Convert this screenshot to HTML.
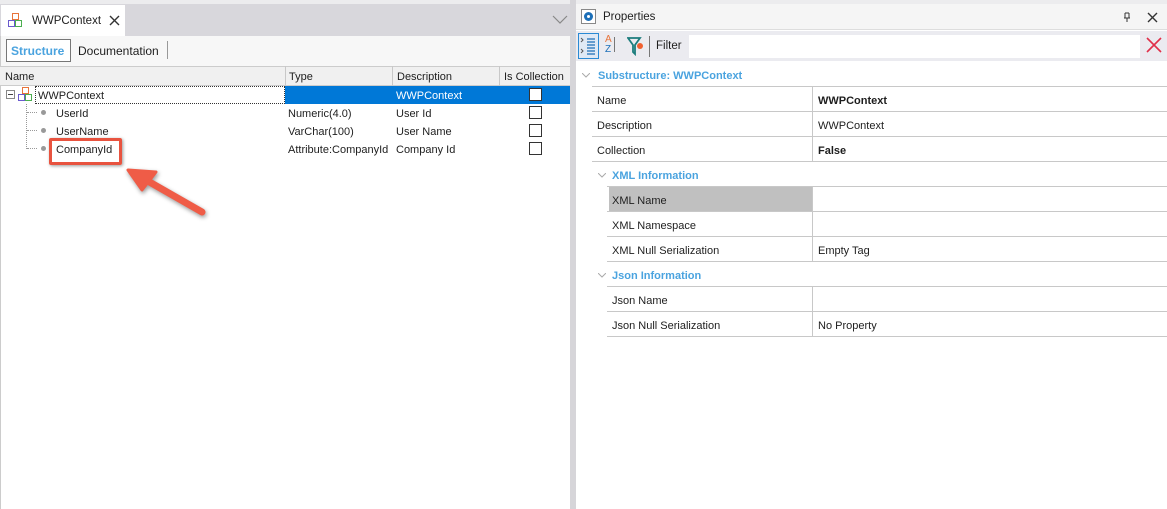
<!DOCTYPE html>
<html><head><style>
*{box-sizing:border-box;margin:0;padding:0}
body{width:1167px;height:509px;background:#fff;font-family:"Liberation Sans",sans-serif;font-size:11px;color:#1e1e1e;position:relative;overflow:hidden}
.a{position:absolute}
.t{position:absolute;white-space:nowrap;font-size:11px;margin-top:1px}
.cb{position:absolute;width:13px;height:13px;border:1px solid #333;background:#fff}
.hl{position:absolute;height:1px;background:#c8c8c8}
.vl{position:absolute;width:1px;background:#c8c8c8}
.b{font-weight:bold}
.blue{color:#4aa3df;font-weight:bold}
</style></head><body>
<div class="a" style="left:0;top:0;width:570px;height:36px;background:#d8d7dc"></div>
<div class="a" style="left:0;top:0;width:570px;height:4px;background:#ececee"></div>
<div class="a" style="left:1px;top:5px;width:124px;height:31px;background:#fff"></div>
<svg class="a" style="left:8px;top:13px" width="16" height="16" viewBox="0 0 16 16"><rect x="4.5" y="0.5" width="6" height="6" fill="#fff" stroke="#e8743b"/><rect x="0.5" y="7.5" width="6" height="6" fill="#fff" stroke="#6a5acd"/><rect x="7.5" y="7.5" width="6" height="6" fill="#fff" stroke="#4caf50"/></svg>
<div class="t" style="left:32px;top:14px;font-size:11.5px">WWPContext</div>
<svg class="a" style="left:109px;top:15px" width="11" height="11"><path d="M1 1L10 10M10 1L1 10" stroke="#333" stroke-width="1.4"/></svg>
<svg class="a" style="left:552px;top:15px" width="16" height="10"><path d="M1 1L8 8L15 1" fill="none" stroke="#888" stroke-width="1.2"/></svg>
<div class="a" style="left:0;top:36px;width:570px;height:30px;background:#f7f7f7;border-left:1px solid #ccc"></div>
<div class="a" style="left:6px;top:39px;width:65px;height:23px;border:1px solid #777;background:#fff"></div>
<div class="t blue" style="left:11px;top:43px;font-size:12px">Structure</div>
<div class="t" style="left:78px;top:43px;font-size:12px">Documentation</div>
<div class="vl" style="left:167px;top:41px;height:18px;background:#999"></div>
<div class="a" style="left:0;top:66px;width:570px;height:20px;background:#f0f0f0;border-top:1px solid #ccc;border-bottom:1px solid #ccc"></div>
<div class="vl" style="left:285px;top:66px;height:20px"></div>
<div class="vl" style="left:392px;top:66px;height:20px"></div>
<div class="vl" style="left:499px;top:66px;height:20px"></div>
<div class="t" style="left:5px;top:70px">Name</div>
<div class="t" style="left:289px;top:70px">Type</div>
<div class="t" style="left:397px;top:70px">Description</div>
<div class="t" style="left:504px;top:70px">Is Collection</div>
<div class="a" style="left:0;top:86px;width:1px;height:423px;background:#ccc"></div>
<div class="a" style="left:285px;top:86px;width:285px;height:18px;background:#0078d7"></div>
<div class="a" style="left:35px;top:86px;width:250px;height:18px;border:1px dotted #333"></div>
<div class="a" style="left:6px;top:90px;width:9px;height:9px;border:1px solid #888;background:#fff"></div>
<div class="a" style="left:8px;top:94px;width:5px;height:1px;background:#444"></div>
<svg class="a" style="left:18px;top:87px" width="16" height="16" viewBox="0 0 16 16"><rect x="4.5" y="0.5" width="6" height="6" fill="#fff" stroke="#e8743b"/><rect x="0.5" y="7.5" width="6" height="6" fill="#fff" stroke="#6a5acd"/><rect x="7.5" y="7.5" width="6" height="6" fill="#fff" stroke="#4caf50"/></svg>
<div class="t" style="left:38px;top:89px">WWPContext</div>
<div class="t" style="left:396px;top:89px;color:#fff">WWPContext</div>
<div class="cb" style="left:529px;top:88px"></div>
<div class="a" style="left:26px;top:104px;width:0;height:45px;border-left:1px dotted #999"></div>
<div class="a" style="left:27px;top:112px;width:10px;border-top:1px dotted #999"></div>
<div class="a" style="left:27px;top:130px;width:10px;border-top:1px dotted #999"></div>
<div class="a" style="left:27px;top:148px;width:10px;border-top:1px dotted #999"></div>
<div class="a" style="left:41px;top:110px;width:5px;height:5px;border-radius:50%;background:#999"></div>
<div class="a" style="left:41px;top:128px;width:5px;height:5px;border-radius:50%;background:#999"></div>
<div class="a" style="left:41px;top:146px;width:5px;height:5px;border-radius:50%;background:#999"></div>
<div class="t" style="left:56px;top:107px">UserId</div>
<div class="t" style="left:56px;top:125px">UserName</div>
<div class="t" style="left:56px;top:143px">CompanyId</div>
<div class="t" style="left:288px;top:107px">Numeric(4.0)</div>
<div class="t" style="left:288px;top:125px">VarChar(100)</div>
<div class="t" style="left:288px;top:143px">Attribute:CompanyId</div>
<div class="t" style="left:396px;top:107px">User Id</div>
<div class="t" style="left:396px;top:125px">User Name</div>
<div class="t" style="left:396px;top:143px">Company Id</div>
<div class="cb" style="left:529px;top:106px"></div>
<div class="cb" style="left:529px;top:124px"></div>
<div class="cb" style="left:529px;top:142px"></div>
<div class="a" style="left:49px;top:138px;width:73px;height:27px;border:3px solid #e8533f;border-radius:2px;box-shadow:1px 1px 3px rgba(0,0,0,.4)"></div>
<svg class="a" style="left:118px;top:162px" width="95" height="62"><g style="filter:drop-shadow(1px 2px 2px rgba(0,0,0,.4))"><path d="M84 50L28 18" stroke="#ef5c47" stroke-width="7" stroke-linecap="round"/><path d="M10 8L38 10L24 28Z" fill="#ef5c47" stroke="#ef5c47" stroke-width="3" stroke-linejoin="round"/></g></svg>
<div class="a" style="left:570px;top:0;width:6px;height:509px;background:#d6d5d9"></div>
<div class="a" style="left:576px;top:0;width:591px;height:4px;background:#ececee"></div>
<div class="a" style="left:576px;top:4px;width:591px;height:26px;background:#f5f5f5;border-bottom:1px solid #ddd"></div>
<div class="a" style="left:581px;top:9px;width:15px;height:15px;border:1px solid #888;background:#fff"></div>
<div class="a" style="left:584px;top:12px;width:9px;height:9px;border-radius:50%;background:#1c6fb8;border:2px dotted #1c6fb8"></div>
<div class="a" style="left:587px;top:15px;width:3px;height:3px;border-radius:50%;background:#fff"></div>
<div class="t" style="left:603px;top:10px;font-size:11.5px">Properties</div>
<svg class="a" style="left:1123px;top:12px" width="8" height="10"><path d="M2 1v5M6 1v5M1 6h6M4 6v4M2 1h4" stroke="#333" fill="none"/></svg>
<svg class="a" style="left:1147px;top:12px" width="11" height="11"><path d="M1 1L10 10M10 1L1 10" stroke="#333" stroke-width="1.4"/></svg>
<div class="a" style="left:576px;top:31px;width:591px;height:30px;background:#ebebf0"></div>
<div class="a" style="left:578px;top:33px;width:21px;height:26px;border:1px solid #2a8ad4;background:#dfe9f5"></div>
<svg class="a" style="left:580px;top:36px" width="18" height="20"><path d="M1 2l2 2-2 2M1 13l2 2-2 2" stroke="#555" fill="none"/><path d="M7 3h8M7 6h8M7 9h8M7 12h8M7 15h8M7 18h8" stroke="#1c6fb8" stroke-width="1.3"/></svg>
<div class="t" style="left:605px;top:33px;font-size:10px;color:#e8743b">A</div>
<div class="t" style="left:605px;top:43px;font-size:10px;color:#1c6fb8">Z</div>
<div class="a" style="left:614px;top:37px;width:1px;height:15px;background:#777"></div>
<svg class="a" style="left:627px;top:36px" width="18" height="20"><path d="M1 2h12L8 9v9L6 16V9Z" fill="none" stroke="#1c7d7d" stroke-width="1.8"/><circle cx="13" cy="10" r="3" fill="#f06030"/></svg>
<div class="a" style="left:649px;top:36px;width:1px;height:21px;background:#777"></div>
<div class="t" style="left:656px;top:39px;font-size:11.5px">Filter</div>
<div class="a" style="left:689px;top:35px;width:451px;height:23px;background:#fff"></div>
<svg class="a" style="left:1145px;top:36px" width="18" height="18"><path d="M2 2L16 16M16 2L2 16" stroke="#e0304a" stroke-width="1.6"/></svg>
<svg class="a" style="left:582px;top:73px" width="8" height="5"><path d="M0 0L4 4L8 0" stroke="#aaa" fill="none"/></svg>
<div class="t blue" style="left:598px;top:69px">Substructure: WWPContext</div>
<div class="hl" style="left:592px;top:86px;width:575px"></div>
<div class="hl" style="left:592px;top:111px;width:575px"></div>
<div class="hl" style="left:592px;top:136px;width:575px"></div>
<div class="hl" style="left:592px;top:161px;width:575px"></div>
<div class="vl" style="left:812px;top:86px;height:76px"></div>
<div class="t" style="left:597px;top:94px">Name</div>
<div class="t" style="left:597px;top:119px">Description</div>
<div class="t" style="left:597px;top:144px">Collection</div>
<div class="t b" style="left:818px;top:94px">WWPContext</div>
<div class="t" style="left:818px;top:119px">WWPContext</div>
<div class="t b" style="left:818px;top:144px">False</div>
<svg class="a" style="left:598px;top:173px" width="8" height="5"><path d="M0 0L4 4L8 0" stroke="#aaa" fill="none"/></svg>
<div class="t blue" style="left:612px;top:169px">XML Information</div>
<div class="a" style="left:609px;top:187px;width:203px;height:24px;background:#c0c0c0"></div>
<div class="hl" style="left:607px;top:186px;width:560px"></div>
<div class="hl" style="left:607px;top:211px;width:560px"></div>
<div class="hl" style="left:607px;top:236px;width:560px"></div>
<div class="hl" style="left:607px;top:261px;width:560px"></div>
<div class="vl" style="left:812px;top:186px;height:76px"></div>
<div class="t" style="left:612px;top:194px">XML Name</div>
<div class="t" style="left:612px;top:219px">XML Namespace</div>
<div class="t" style="left:612px;top:244px">XML Null Serialization</div>
<div class="t" style="left:818px;top:244px">Empty Tag</div>
<svg class="a" style="left:598px;top:273px" width="8" height="5"><path d="M0 0L4 4L8 0" stroke="#aaa" fill="none"/></svg>
<div class="t blue" style="left:612px;top:269px">Json Information</div>
<div class="hl" style="left:607px;top:286px;width:560px"></div>
<div class="hl" style="left:607px;top:311px;width:560px"></div>
<div class="hl" style="left:607px;top:336px;width:560px"></div>
<div class="vl" style="left:812px;top:286px;height:51px"></div>
<div class="t" style="left:612px;top:294px">Json Name</div>
<div class="t" style="left:612px;top:319px">Json Null Serialization</div>
<div class="t" style="left:818px;top:319px">No Property</div>
</body></html>
